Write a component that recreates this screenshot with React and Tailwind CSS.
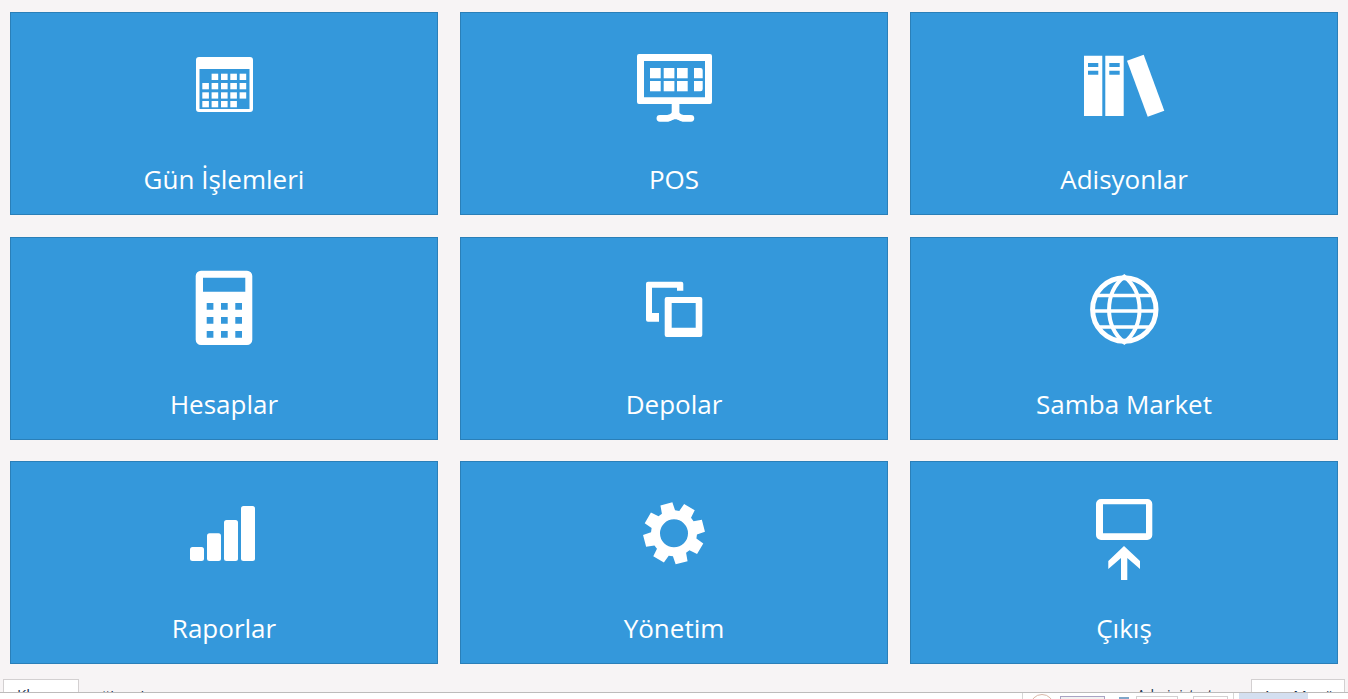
// Main menu tile screen
const gearPath = (() => {
  // 8 teeth around the center, first tooth slightly left of vertical
  const cx = 54, cy = 43.3, outer = 31, root = 23;
  const pts = [];
  for (let i = 0; i < 8; i++) {
    const a = ((-14.5 + i * 45 - 90) * Math.PI) / 180;
    const offs = [[-0.3, root], [-0.2, outer], [0.2, outer], [0.3, root]];
    offs.forEach(([d, r]) => {
      pts.push(`${(cx + r * Math.cos(a + d)).toFixed(2)} ${(cy + r * Math.sin(a + d)).toFixed(2)}`);
    });
  }
  return `M${pts.join('L')}Z M${cx + 14} ${cy}a14 14 0 1 0 -28 0a14 14 0 1 0 28 0Z`;
})();

const CalendarIcon = () => {
  const xs = [32.3, 41.6, 51, 60.3, 69.6];
  const cells = [
    [33.7, [1, 2, 3, 4]],
    [43, [0, 1, 2, 3, 4]],
    [52.3, [0, 1, 2, 3, 4]],
    [61, [0, 1, 2, 3]],
  ];
  return (
    <>
      <path fillRule="evenodd" d="M29 17h51a3 3 0 0 1 3 3v49a3 3 0 0 1-3 3H29a3 3 0 0 1-3-3V20a3 3 0 0 1 3-3ZM29.5 29v40h50V29Z" />
      {cells.map(([y, cols]) => cols.map((c) => <rect key={`${y}-${c}`} x={xs[c]} y={y} width="6.6" height="6.3" />))}
    </>
  );
};

const MonitorIcon = () => (
  <>
    <path fillRule="evenodd" d="M19 14h71a2 2 0 0 1 2 2v46a2 2 0 0 1-2 2H19a2 2 0 0 1-2-2V16a2 2 0 0 1 2-2ZM24 21v36.300h61V21Z" />
    {[30, 43.7, 57].map((x) => [28, 41].map((y) => <rect key={`${x}-${y}`} x={x} y={y} width="10.700" height="10.300" />))}
    <path d="M74 28h6.500a2.200 2.200 0 0 1 2.200 2.200v8.100H74ZM74 41h8.700v8a2.200 2.200 0 0 1-2.200 2.200H74Z" />
    <path d="M51.700 64h7.700v8c0 2 3 3 5 3h6.500a3.300 3.300 0 0 1 0 6.700h-7c-4 0-5.500-2.500-8.500-2.500s-4.500 2.500-8.500 2.500h-7a3.300 3.300 0 0 1 0-6.700h6.500c2 0 5.300-1 5.300-3Z" />
  </>
);

const BooksIcon = () => (
  <>
    <path fillRule="evenodd" d="M14 15.700h18.300V76H14ZM18 23v4h10.300v-4ZM18 30.700v4h10.300v-4Z" />
    <path fillRule="evenodd" d="M35.300 15.700h18.400V76H35.300ZM39.300 23v4h10.400v-4ZM39.300 30.700v4h10.400v-4Z" />
    <path d="M57 20.700 73.700 14.700 94.300 70.700 77.700 76.700Z" />
  </>
);

const CalculatorIcon = () => {
  const xs = [36.7, 51, 65.3];
  const ys = [38, 52, 66];
  return (
    <path
      fillRule="evenodd"
      d={
        'M31 5.700h46a5.300 5.300 0 0 1 5.300 5.300v63.700a5.300 5.300 0 0 1-5.300 5.300H31a5.300 5.300 0 0 1-5.300-5.300V11A5.300 5.300 0 0 1 31 5.700ZM33 12.700v14h42.300v-14Z' +
        xs.map((x) => ys.map((y) => `M${x} ${y}h6.700v6.700h-6.700Z`).join('')).join('')
      }
    />
  );
};

const CopyIcon = () => (
  <>
    <path fillRule="evenodd" d="M46.700 32h33.600a2 2 0 0 1 2 2v36a2 2 0 0 1-2 2H46.700a2 2 0 0 1-2-2V34a2 2 0 0 1 2-2ZM51.700 38v24.700h24V38Z" />
    <path d="M28 16.700h33.300a2 2 0 0 1 2 2v7H57v-3H32V48h7v8.700H28a2 2 0 0 1-2-2v-36a2 2 0 0 1 2-2Z" />
  </>
);

const GlobeIcon = () => (
  <g fill="none" stroke="white" strokeWidth="4">
    <circle cx="54.300" cy="44.500" r="31.700" strokeWidth="5" />
    <path d="M54.300 11.500C34 28 34 61 54.300 77.500C74.600 61 74.600 28 54.300 11.500Z" />
    <path d="M27 30.500h54.600M22.500 46h63.600M27 62h54.600" strokeWidth="3.500" />
  </g>
);

const BarsIcon = () => (
  <>
    <rect x="20" y="57" width="14" height="14" rx="2.500" />
    <rect x="37" y="43.300" width="14" height="27.700" rx="2.500" />
    <rect x="54" y="30" width="14" height="41" rx="2.500" />
    <rect x="71" y="16" width="14" height="55" rx="2.500" />
  </>
);

const GearIcon = () => <path fillRule="evenodd" d={gearPath} />;

const ExitIcon = () => (
  <>
    <path fillRule="evenodd" d="M31 9h46.300a5 5 0 0 1 5 5v31a5 5 0 0 1-5 5H31a5 5 0 0 1-5-5V14a5 5 0 0 1 5-5ZM33 14.300v29h43v-29Z" />
    <path d="M54 56 70 71v8L57.300 68v22H51V68L38.300 79v-8Z" />
  </>
);

const tiles = [
  { label: 'Gün İşlemleri', icon: <CalendarIcon /> },
  { label: 'POS', icon: <MonitorIcon /> },
  { label: 'Adisyonlar', icon: <BooksIcon /> },
  { label: 'Hesaplar', icon: <CalculatorIcon /> },
  { label: 'Depolar', icon: <CopyIcon /> },
  { label: 'Samba Market', icon: <GlobeIcon /> },
  { label: 'Raporlar', icon: <BarsIcon />, low: true },
  { label: 'Yönetim', icon: <GearIcon />, low: true },
  { label: 'Çıkış', icon: <ExitIcon />, low: true },
];

export default function App() {
  return (
    <div className="h-[699px] flex flex-col overflow-hidden bg-[#f7f4f5] font-['Open_Sans',sans-serif]">
      <div className="grid grid-cols-3 gap-x-[22px] gap-y-[21.5px] pl-[10px] pr-[10px] pt-[12px]">
        {tiles.map((t) => (
          <button key={t.label} className="h-[203px] flex flex-col items-center bg-[#3498db] border border-[#2a7fb8] text-white">
            {/* third row sits a pixel lower inside its tile */}
            <svg viewBox={t.low ? '-1 -1 110 95' : '-1 0 110 95'} className="w-[110px] h-[95px] mt-[27px] shrink-0" fill="white">
              {t.icon}
            </svg>
            <span className="mt-[26px] text-[26px] leading-[36px] text-white">{t.label}</span>
          </button>
        ))}
      </div>

      {/* bottom toolbar, cut off by the window edge */}
      <div className="h-[28px] flex items-start pt-[15px] overflow-hidden text-[15px] leading-[22px] text-[#16324f]">
        <div className="ml-[3px] w-[76px] h-[30px] bg-white border border-[#d3d0d1] pl-[13px] pt-[3px]">Klavye</div>
        <div className="ml-[5px] pt-[6px]">Bağlantılı</div>
        <div className="ml-auto pt-[5px] text-[14px]">Administrator</div>
        <div className="ml-[24px] mr-[3px] w-[94px] h-[30px] bg-white border border-[#d3d0d1] pt-[4px] text-center">Ana Menü</div>
      </div>
      <div className="h-[7px] shrink-0 flex items-start bg-white border-t border-[#bdbbbb] overflow-hidden">
        <div className="ml-[1022px] w-px h-[6px] bg-[#d6d6d6]" />
        <div className="ml-[7px] mt-[1px] w-[24px] h-[24px] shrink-0 rounded-full border border-[#d9b7a8]" />
        <div className="ml-[6px] mt-[3px] w-[45px] h-[10px] shrink-0 bg-[#f2f2f2] border border-[#a9a3c4]" />
        <div className="ml-[14px] mt-[4px] w-[10px] h-[2px] shrink-0 bg-[#7fa6c9]" />
        <div className="ml-[7px] mt-[3px] w-[42px] h-[10px] shrink-0 border border-[#d3d0d1]" />
        <div className="ml-[15px] mt-[3px] w-[35px] h-[10px] shrink-0 border border-[#d3d0d1]" />
        <div className="ml-[5px] w-px h-[6px] bg-[#d6d6d6]" />
        <div className="ml-[5px] w-[69px] h-[6px] bg-[#d4dff0]" />
      </div>
    </div>
  );
}
